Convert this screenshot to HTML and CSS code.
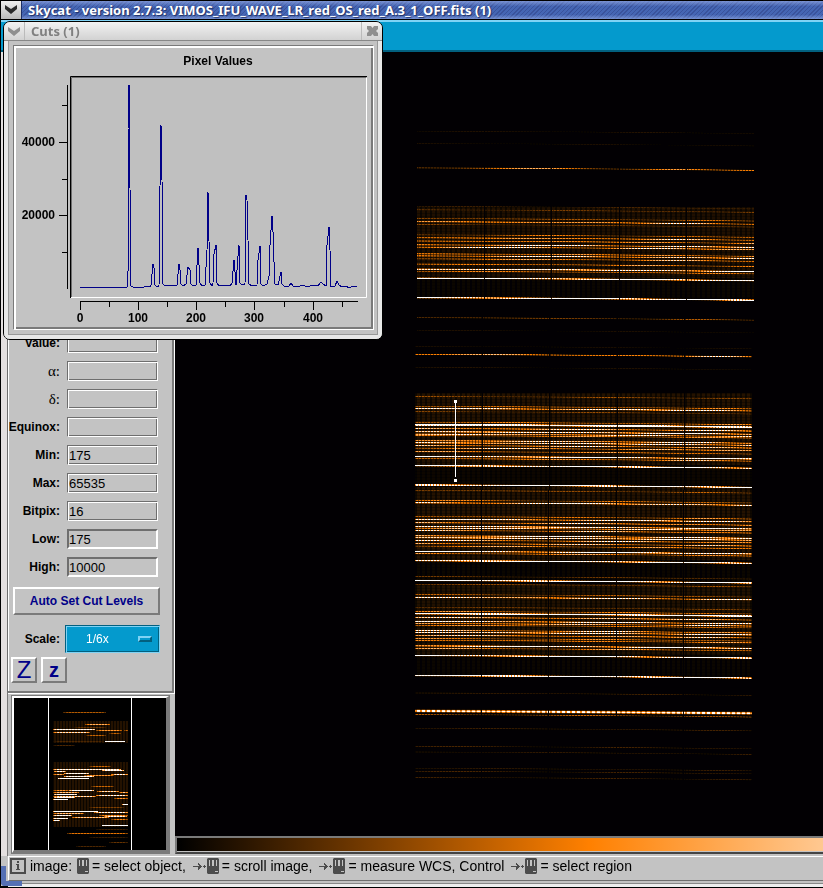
FILE: index.html
```html
<!DOCTYPE html>
<html lang="en">

<head>
    <meta charset="UTF-8">
    <meta name="viewport" content="width=device-width, initial-scale=1.0">
    <title>Skycat</title>
    <link rel="stylesheet" href="styles.css">
</head>

<body>
    <div class="skycat">
        <header class="titlebar">
            <button class="title-btn" type="button" aria-label="Window menu">
                <svg width="14" height="10" viewBox="0 0 14 10"><path d="M1 0l6 4 6-4v4L7 9 1 4z" fill="#2a2a2a"/></svg>
            </button>
            <h1>Skycat - version 2.7.3: VIMOS_IFU_WAVE_LR_red_OS_red_A.3_1_OFF.fits (1)</h1>
        </header>
        <nav class="menubar"></nav>

        <main class="main">
            <aside class="side">
                <form class="panel">
                    <div class="row">
                        <label for="value">Value:</label>
                        <input type="text" id="value" readonly>
                    </div>
                    <div class="row">
                        <label for="alpha" class="greek">α:</label>
                        <input type="text" id="alpha" readonly>
                    </div>
                    <div class="row">
                        <label for="delta" class="greek">δ:</label>
                        <input type="text" id="delta" readonly>
                    </div>
                    <div class="row">
                        <label for="equinox">Equinox:</label>
                        <input type="text" id="equinox" readonly>
                    </div>
                    <div class="row">
                        <label for="min">Min:</label>
                        <input type="text" id="min" value="175" readonly>
                    </div>
                    <div class="row">
                        <label for="max">Max:</label>
                        <input type="text" id="max" value="65535" readonly>
                    </div>
                    <div class="row">
                        <label for="bitpix">Bitpix:</label>
                        <input type="text" id="bitpix" value="16" readonly>
                    </div>
                    <div class="row">
                        <label for="low">Low:</label>
                        <input type="text" id="low" class="edit" value="175">
                    </div>
                    <div class="row">
                        <label for="high">High:</label>
                        <input type="text" id="high" class="edit" value="10000">
                    </div>
                    <button class="btn auto" type="button">Auto Set Cut Levels</button>
                    <div class="row scale">
                        <label for="scale">Scale:</label>
                        <div class="menu-wrap">
                            <select id="scale">
                                <option>1/6x</option>
                            </select>
                            <span class="knob"></span>
                        </div>
                    </div>
                    <div class="zooms">
                        <button class="btn zoom big" type="button">Z</button>
                        <button class="btn zoom small" type="button">z</button>
                    </div>
                </form>
                <div class="pan">
                    <canvas id="pan" width="152" height="152"></canvas>
                </div>
            </aside>

            <section class="view">
                <div class="image">
                    <div class="frame">
                        <canvas id="sky" width="345" height="665"></canvas>
                        <svg class="cutline" width="7" height="84" viewBox="0 0 7 84">
                            <path d="M3.5 4v74" stroke="#fff"/>
                            <path d="M2 1h3v3H2zM2 80h3v3H2z" fill="#fff"/>
                        </svg>
                    </div>
                </div>
                <div class="colorbar"></div>
            </section>
        </main>

        <footer class="status">
            <svg class="info" width="16" height="16" viewBox="0 0 16 16">
                <path d="M1 1h14v14H1z" fill="none" stroke="#4c4c4c" stroke-width="2"/>
                <path d="M7 3h2v2H7zM6 6h3v5h1v1H6v-1h1V7H6z" fill="#4c4c4c"/>
            </svg>
            <span class="first">image:</span>
            <svg class="mouse" width="12" height="16" viewBox="0 0 12 16"><use href="#mouse"/></svg>
            <span>= select object,</span>
            <svg class="arrow" width="14" height="16" viewBox="0 0 14 16"><use href="#arrow"/></svg>
            <svg class="mouse" width="12" height="16" viewBox="0 0 12 16"><use href="#mouse"/></svg>
            <span>= scroll image,</span>
            <svg class="arrow" width="14" height="16" viewBox="0 0 14 16"><use href="#arrow"/></svg>
            <svg class="mouse" width="12" height="16" viewBox="0 0 12 16"><use href="#mouse"/></svg>
            <span>= measure WCS, Control</span>
            <svg class="arrow" width="14" height="16" viewBox="0 0 14 16"><use href="#arrow"/></svg>
            <svg class="mouse" width="12" height="16" viewBox="0 0 12 16"><use href="#mouse"/></svg>
            <span>= select region</span>
        </footer>
        <div class="corner"></div>
    </div>

    <svg width="0" height="0" class="defs">
        <defs>
            <g id="mouse">
                <path d="M1 0h10l1 1v14l-1 1H1l-1-1V1z" fill="#4c4c4c"/>
                <path d="M2 2h1v6H2zM5 2h2v6H5zM9 2h1v6H9zM8 13h3v1H8z" fill="#c3c3c3"/>
            </g>
            <g id="arrow" fill="#4c4c4c">
                <path d="M0 8h8v1H0zM5 5h1v1h1v1h1v1h1v1H8v1H7v1H6v1H5V9h1V7H5z"/>
                <path d="M10 8h3v1h-3zM11 7h1v3h-1z"/>
            </g>
        </defs>
    </svg>

    <section class="cuts">
        <header class="cuts-title">
            <button class="cuts-btn" type="button" aria-label="Window menu">
                <svg width="12" height="9" viewBox="0 0 12 9"><path d="M0 0l6 4 6-4v4L6 9 0 4z" fill="#8f8f8f"/></svg>
            </button>
            <h2>Cuts (1)</h2>
            <button class="cuts-btn close" type="button" aria-label="Close">
                <svg width="11" height="10" viewBox="0 0 11 10"><path d="M0 0h4l1.500 2L7 0h4v3L9 5l2 2v3H7L5.500 8 4 10H0V7l2-2-2-2z" fill="#8f8f8f"/></svg>
            </button>
        </header>
        <div class="cuts-body">
            <div class="graph">
                <svg viewBox="16 48 355 279">
                    <rect x="71" y="77" width="296" height="220" fill="#c0c0c0"/>
                    <path d="M71 297.500h295.500V78" fill="none" stroke="#fff"/>
                    <path d="M70.500 298V76.500H367" fill="none" stroke="#000"/>
                    <path d="M71.500 297V77.500H366" fill="none" stroke="#6e6e6e"/>
                    <g stroke="#000" fill="none">
                        <path d="M67.500 85v204M62 105.500h5M59 142.500h8M62 179.500h5M59 215.500h8M62 252.500h5"/>
                        <path d="M80 301.500h278M80.500 302v8M109.500 302v5M138.500 302v8M167.500 302v5M196.500 302v8M225.500 302v5M254.500 302v8M284.500 302v5M313.500 302v8M342.500 302v5"/>
                    </g>
                    <g class="tick">
                        <text x="218" y="65" text-anchor="middle">Pixel Values</text>
                        <text x="55" y="146" text-anchor="end">40000</text>
                        <text x="55" y="219" text-anchor="end">20000</text>
                        <text x="80" y="322" text-anchor="middle">0</text>
                        <text x="138" y="322" text-anchor="middle">100</text>
                        <text x="196" y="322" text-anchor="middle">200</text>
                        <text x="254" y="322" text-anchor="middle">300</text>
                        <text x="313" y="322" text-anchor="middle">400</text>
                    </g>
                    <polyline class="curve" points="80,287 83,288 85,287 127,287 128,271 128,129 129,85 129,110 130,188 131,286 133,287 144,287 146,286 150,287 151,285 153,264 154,268 155,285 157,287 159,286 160,186 161,125 162,180 163,284 165,286 168,285 170,286 177,285 179,264 180,270 181,284 183,286 186,284 188,267 190,270 191,284 193,286 196,285 197,265 198,248 199,265 200,283 202,286 205,285 207,250 208,192 209,241 210,283 212,286 213,283 214,254 216,245 216,265 217,283 219,286 223,285 230,286 232,283 234,260 235,272 236,285 238,256 239,245 240,283 242,285 245,284 246,195 247,200 248,240 249,284 252,286 257,285 258,260 260,246 260,252 261,284 263,286 267,284 269,276 270,245 272,216 273,232 274,262 275,284 278,285 281,272 282,284 284,286 289,286 291,283 293,286 300,286 303,285 307,287 313,285 318,286 321,282 323,284 326,286 327,245 329,227 330,250 331,286 335,286 337,281 339,285 342,287 346,286 349,288 353,286 357,287"/>
                </svg>
            </div>
        </div>
    </section>

    <script src="script.js"></script>
</body>

</html>
```

FILE: styles.css
```css
*,
::before,
::after {
    box-sizing: border-box;
    margin: 0;
    padding: 0;
}

body {
    font-family: "Liberation Sans", Arial, sans-serif;
    font-size: 12px;
    color: #000;
    background: #000;
    overflow: hidden;
}

.defs {
    position: absolute;
}

/* main window */
.skycat {
    position: relative;
    display: flex;
    flex-direction: column;
    height: 100vh;
    background: #c3c3c3;
    border-left: 1px solid #000;
    border-bottom: 2px solid #000;
}

.titlebar {
    display: flex;
    align-items: center;
    flex: none;
    height: 20px;
    border-top: 1px solid #000;
    border-bottom: 1px solid #000;
    background: linear-gradient(rgba(160, 180, 235, 0.6), rgba(80, 110, 190, 0) 30%, rgba(80, 110, 190, 0) 75%, rgba(140, 165, 225, 0.7)),
        repeating-linear-gradient(135deg, #4566b4 0 2px, #3a539c 2px 3px);
}

.title-btn {
    display: flex;
    align-items: center;
    justify-content: center;
    width: 21px;
    height: 18px;
    border: 0;
    border-right: 1px solid #1d2f66;
    background: linear-gradient(#eee, #bbb);
}

.titlebar h1 {
    margin-left: 6px;
    font: bold 13px/18px "Noto Sans", sans-serif;
    color: #fff;
    text-shadow: 1px 1px 1px #1d2f66;
    white-space: nowrap;
}

.menubar {
    flex: none;
    height: 32px;
    background: #049acd;
    border-top: 2px solid #7fd3f5;
    border-bottom: 2px solid #02607f;
}

.main {
    flex: 1;
    min-height: 0;
    display: grid;
    grid-template-columns: 168px 1fr;
    border-left: 6px solid #e4e0e0;
    box-shadow: inset 1px 0 #777;
}

.side {
    display: flex;
    flex-direction: column;
    min-height: 0;
}

.panel {
    flex: 1;
    display: flex;
    flex-direction: column;
    justify-content: flex-end;
    padding: 0 14px 8px 5px;
    border-left: 1px solid #6e6e6e;
    border-right: 2px solid #7a7a7a;
    border-bottom: 2px solid #7a7a7a;
    box-shadow: inset 1px 0 #fff, 1px 1px #fff;
    margin-right: 1px;
}

.row {
    display: flex;
    align-items: center;
    justify-content: flex-end;
    gap: 7px;
    height: 28px;
    font-weight: bold;
}

.row input {
    flex: none;
    width: 91px;
    height: 20px;
    padding-left: 1px;
    font: 13px "Liberation Sans", Arial, sans-serif;
    background: #c3c3c3;
    border: 1px solid;
    border-color: #6e6e6e #fff #fff #6e6e6e;
    box-shadow: inset 1px 1px #fff, inset -1px -1px #6e6e6e;
    outline: none;
}

.row .edit {
    padding-left: 0;
    border-width: 2px;
    box-shadow: none;
}

.greek {
    font: 15px "Liberation Serif", serif;
}

.btn {
    color: #000088;
    background: #c3c3c3;
    border: 2px solid;
    border-color: #fff #7a7a7a #7a7a7a #fff;
}

.auto {
    flex: none;
    height: 28px;
    margin: 6px -2px 10px 0;
    font: bold 12px "Liberation Sans", Arial, sans-serif;
}

.scale {
    gap: 5px;
    margin-right: -2px;
}

.menu-wrap {
    position: relative;
}

.menu-wrap select {
    appearance: none;
    display: block;
    width: 95px;
    height: 28px;
    padding-left: 20px;
    font: 12px "Liberation Sans", Arial, sans-serif;
    color: #fff;
    background: #049acd;
    border: 1px solid;
    border-color: #02607f #7fd3f5 #7fd3f5 #02607f;
    box-shadow: inset 1px 1px #7fd3f5, inset -1px -1px #02607f;
}

.knob {
    position: absolute;
    right: 8px;
    top: 11px;
    width: 14px;
    height: 6px;
    background: #049acd;
    border: 2px solid;
    border-color: #7fd3f5 #02607f #02607f #7fd3f5;
}

.zooms {
    display: flex;
    gap: 4px;
    margin-top: 4px;
    margin-left: -2px;
}

.zoom {
    width: 26px;
    height: 26px;
}

.big {
    font: 24px/22px "Liberation Sans", Arial, sans-serif;
}

.small {
    font: bold 20px/18px "Liberation Sans", Arial, sans-serif;
}

/* pan window */
.pan {
    flex: none;
    width: 157px;
    margin: 3px 0 3px 5px;
    border: 2px solid;
    border-color: #fff #7a7a7a #7a7a7a #fff;
    border-right-width: 3px;
    border-bottom-width: 3px;
    outline: 1px solid #7a7a7a;
    background: #000;
}

.pan canvas {
    display: block;
}

/* image display */
.view {
    display: flex;
    flex-direction: column;
    min-height: 0;
    min-width: 0;
}

.image {
    flex: 1;
    min-height: 0;
    background: #020003;
    overflow: hidden;
}

.frame {
    position: relative;
    width: 345px;
    margin: 68px 0 0 237px;
}

.frame canvas {
    display: block;
}

.cutline {
    position: absolute;
    left: 40px;
    top: 279px;
}

.colorbar {
    flex: none;
    height: 18px;
    margin-bottom: 2px;
    border: 2px solid #7a7a7a;
    border-bottom-color: #444;
    border-right: 0;
    box-shadow: inset 0 -1px #c3c3c3;
    background: linear-gradient(90deg, #000, #ff8000 412px, #fff 824px);
}

.status {
    flex: none;
    display: flex;
    align-items: center;
    height: 25px;
    margin: 0 0 5px 7px;
    padding: 0 0 5px 1px;
    border-top: 1px solid #fff;
    border-left: 1px solid #fff;
    border-bottom: 1px solid #6e6e6e;
    font-size: 14px;
    white-space: nowrap;
    box-shadow: 0 2px #c3c3c3, 0 3px #888, 0 6px #eee;
}

.status .first {
    margin: 0 5px 0 4px;
}

.mouse {
    flex: none;
    margin-right: 3px;
}

.arrow {
    flex: none;
    margin-left: 7px;
}

.corner {
    position: absolute;
    left: 0;
    bottom: 0;
    width: 21px;
    height: 20px;
    border-left: 5px solid #5570b4;
    border-bottom: 5px solid #5570b4;
    border-bottom-left-radius: 4px;
}

/* cuts window */
.cuts {
    position: absolute;
    left: 3px;
    top: 21px;
    width: 380px;
    background: #c3c3c3;
    border: 1px solid #000;
    border-radius: 7px;
    overflow: hidden;
}

.cuts-title {
    display: flex;
    align-items: center;
    height: 19px;
    background: linear-gradient(#f2f2f2, #d2d2d2);
    border-bottom: 1px solid #888;
}

.cuts-title h2 {
    flex: 1;
    margin-left: 6px;
    font: bold 13px/18px "Noto Sans", sans-serif;
    color: #808080;
}

.cuts-btn {
    display: flex;
    align-items: center;
    justify-content: center;
    width: 21px;
    height: 18px;
    border: 0;
    border-right: 1px solid #bbb;
    background: none;
}

.close {
    border-right: 0;
    border-left: 1px solid #bbb;
}

.cuts-body {
    padding: 4px 4px 5px 5px;
    border: 4px solid #e8e8e8;
    border-top: 0;
    box-shadow: inset 1px 0 #999, inset -1px 0 #999, inset 0 -1px #999;
}

.graph {
    border: 1px solid;
    border-color: #7a7a7a #fff #fff #7a7a7a;
    box-shadow: inset 2px 2px #fff, inset -2px -2px #7a7a7a;
    padding: 2px;
}

.graph svg {
    display: block;
    width: 100%;
}

.tick {
    font-size: 12px;
    font-weight: bold;
}

.curve {
    fill: none;
    stroke: #000088;
    stroke-width: 1;
    shape-rendering: crispEdges;
}
```

FILE: script.js
```js
// spectral lines: row at the left edge, where it steps down (0..1), peak
var lines = [
    [131, 0.5, 0.06], [143, 0.35, 0.05], [168, 0.58, 0.6], [206, 0.4, 0.1],
    [210, 0.6, 0.2], [219, 0.7, 0.35], [222, 0.64, 0.95], [224, 0.3, 0.2],
    [235, 0.6, 0.4], [238, 0.62, 0.85], [241, 0.55, 0.7], [245, 0.6, 1.2],
    [247, 0.5, 1], [254, 0.6, 0.7], [256, 0.58, 1.2], [259, 0.6, 0.7],
    [264, 0.52, 0.6], [269, 0.5, 1.8], [271, 0.4, 0.5], [278, 0.46, 3],
    [297, 0.22, 3.6], [317, 0.25, 0.3], [330, 0.4, 0.05], [346, 0.4, 0.05],
    [354, 0.4, 0.85], [367, 0.4, 0.06],
    [396, 0.4, 0.25], [406, 0.4, 0.45], [408, 0.33, 1.5], [411, 0.3, 0.2],
    [422, 0.45, 0.5], [424, 0.35, 3], [425, 0.5, 1.8], [428, 0.3, 1.1],
    [431, 0.2, 1.7], [434, 0.5, 1.1], [435, 0.3, 0.6], [440, 0.2, 1.2],
    [442, 0.15, 1.5], [445, 0.3, 0.9], [448, 0.5, 0.8], [451, 0.3, 0.6],
    [456, 0.35, 2.2], [458, 0.25, 0.7], [465, 0.22, 3], [484, 0.04, 3.6],
    [490, 0.3, 0.3], [500, 0.35, 0.45], [502, 0.15, 1.5], [516, 0.3, 0.5],
    [519, 0.4, 1.5], [522, 0.2, 0.9], [526, 0.35, 1.6], [528, 0.5, 1],
    [530, 0.3, 0.8], [535, 0.15, 1.5], [537, 0.2, 1.7], [540, 0.4, 0.9],
    [543, 0.3, 0.8], [546, 0.5, 0.6], [551, 0.35, 2.2], [553, 0.3, 0.6],
    [560, 0.2, 3], [576, 0.3, 0.2], [580, 0.35, 3.6], [584, 0.4, 0.25],
    [594, 0.3, 0.35], [597, 0.42, 1.3], [607, 0.4, 0.2], [611, 0.35, 0.5],
    [613, 0.3, 2.8], [614, 0.6, 2.2], [617, 0.3, 1], [621, 0.4, 1.5],
    [623, 0.3, 0.9], [625, 0.4, 0.5], [630, 0.35, 0.9], [632, 0.36, 1.5],
    [635, 0.35, 0.9], [638, 0.3, 0.5], [640, 0.4, 0.6], [645, 0.1, 2],
    [648, 0.4, 0.6], [655, 0.28, 3], [675, 0.28, 3.4], [693, 0.55, 0.12],
    [714, 0.3, 0.35], [728, 0.4, 0.12], [746, 0.4, 0.12], [752, 0.55, 0.1],
    [768, 0.4, 0.1], [771, 0.4, 0.12], [777, 0.4, 0.12]
];

// faint background of each block: top, bottom, level
var haze = [
    [207, 278, 0.06], [278, 298, 0.022], [393, 465, 0.07], [465, 485, 0.025],
    [487, 560, 0.07], [560, 582, 0.022], [584, 655, 0.065], [655, 677, 0.022]
];

// pan view: row, from, to, peak
var small = [
    [14, 49, 92, 0.35], [26, 71, 96, 0.7], [29, 60, 92, 0.2], [31, 39, 81, 1.4],
    [32, 82, 108, 0.6], [32, 110, 114, 0.6], [34, 39, 76, 0.9], [35, 95, 107, 0.4],
    [37, 72, 92, 0.4], [43, 91, 111, 2.4], [43, 39, 90, 0.15], [47, 39, 61, 0.15],
    [68, 75, 97, 0.4], [71, 39, 107, 1.2], [72, 88, 110, 1.4], [73, 40, 52, 1.2],
    [75, 50, 75, 1.4], [76, 39, 50, 0.8], [76, 97, 114, 1], [77, 70, 100, 0.6],
    [78, 50, 80, 1.4], [80, 44, 75, 2.2], [88, 77, 100, 0.4], [92, 55, 80, 1.5],
    [92, 39, 55, 0.6], [93, 83, 105, 0.9], [94, 39, 65, 0.8], [94, 105, 114, 0.9],
    [96, 40, 63, 1.6], [97, 82, 114, 1], [98, 39, 82, 0.9], [99, 40, 61, 1.6],
    [100, 100, 114, 0.6], [101, 39, 54, 2.2], [106, 108, 114, 2.2], [109, 75, 110, 0.25],
    [113, 39, 84, 2.4], [114, 80, 114, 1], [115, 39, 70, 0.8], [117, 39, 58, 1.4],
    [117, 85, 114, 0.6], [118, 90, 113, 1.1], [119, 58, 95, 0.8], [120, 39, 54, 1.7],
    [121, 97, 114, 0.5], [122, 39, 46, 2], [127, 88, 114, 2.4], [131, 82, 114, 0.12],
    [135, 53, 114, 0.45], [139, 75, 114, 0.1], [144, 95, 114, 0.2], [148, 62, 92, 0.15]
];

function tilt(t) {
    return t + 1.5 * t * t;
}

// heat colour map
function plot(data, w, x, y, v) {
    var i = (y * w + x) * 4;
    v = Math.min(v, 1);
    data[i] = Math.min(255, 510 * v);
    data[i + 1] = 255 * v;
    data[i + 2] = Math.max(0, 510 * v - 255);
    data[i + 3] = 255;
}

function drawSky() {
    var cv = document.getElementById('sky');
    var ctx = cv.getContext('2d');
    var img = ctx.createImageData(cv.width, cv.height);
    for (var y = 0; y < cv.height; y++) {
        var row = y + 120;
        var left = row < 340 ? 5 : 3;
        var shift = row < 310 ? 0 : row < 490 ? 2 : 3;
        var level = 0;
        haze.forEach(function (h) {
            if (row >= h[0] && row < h[1]) level = h[2];
        });
        for (var x = left; x < left + 337; x++) {
            var t = (x - left) / 337;
            var v = level * (x % 5 < 3 ? 1 : 0.4) * (row % 3 ? 1 : 0.7);
            for (var n = 0; n < lines.length; n++) {
                var d = row - (lines[n][0] + 0.5 - tilt(lines[n][1]) + tilt(t));
                if (Math.abs(d) > 1.2) continue;
                var mod = x % 3 ? 1 : 0.45;
                v += lines[n][2] * mod * Math.exp(-d * d * 5) * (0.9 + 0.3 * Math.sin(x / 29 + n * 2));
            }
            // bright doublet near the bottom
            var b = row - 710.4 - 2.4 * t;
            if (Math.abs(b) < 2) v += 1.3 * Math.exp(-b * b) * (x % 5 < 3 ? 1 : 0.5);
            // gaps between the fibre modules
            var g = x + shift;
            if (g == 72 || g == 139 || g == 207 || g == 274) v *= 0.05;
            if (v > 0.01) plot(img.data, cv.width, x, y, v);
        }
    }
    ctx.putImageData(img, 0, 0);
}

function drawPan() {
    var cv = document.getElementById('pan');
    var ctx = cv.getContext('2d');
    var img = ctx.createImageData(cv.width, cv.height);
    for (var y = 23; y < 129; y++) {
        if (y > 44 && y < 64) continue;
        for (var x = 39; x < 114; x++) {
            plot(img.data, cv.width, x, y, x % 3 ? 0.07 : 0.02);
        }
    }
    small.forEach(function (s) {
        for (var x = s[1]; x < s[2]; x++) {
            var edge = Math.min(1, (Math.min(x - s[1], s[2] - x) + 4) / 9);
            plot(img.data, cv.width, x, s[0], s[3] * edge * (x % 3 ? 1 : 0.6));
        }
    });
    ctx.putImageData(img, 0, 0);
    ctx.fillStyle = '#fff';
    ctx.fillRect(34, 0, 1, 152);
    ctx.fillRect(117, 0, 1, 152);
}

drawSky();
drawPan();
```
